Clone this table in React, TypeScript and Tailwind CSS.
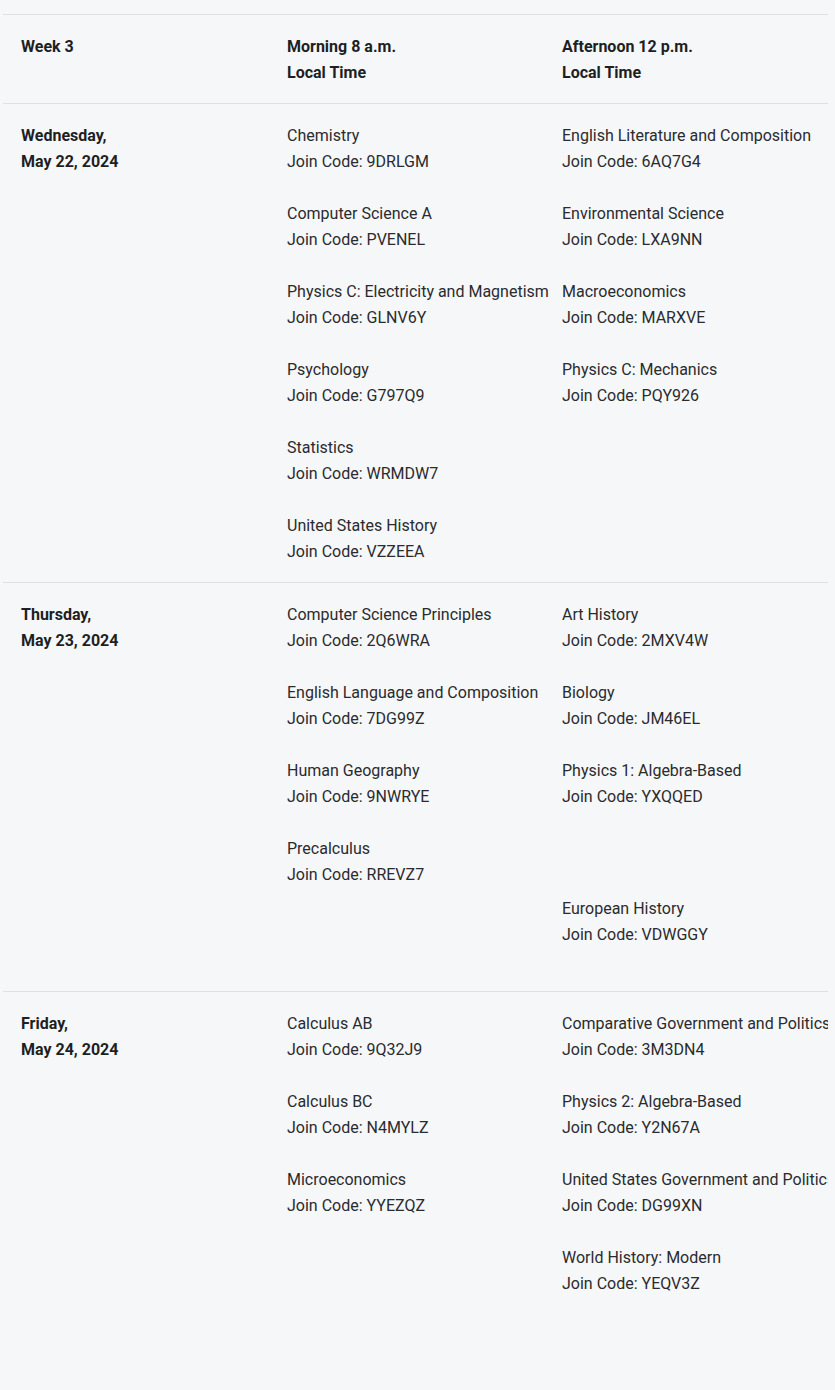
import React from "react";

type Entry = { name: string; code: string; gapBefore?: number };
type Row = { day: string; date: string; morning: Entry[]; afternoon: Entry[]; extraBottom?: boolean };

const rows: Row[] = [
  {
    day: "Wednesday,",
    date: "May 22, 2024",
    morning: [
      { name: "Chemistry", code: "9DRLGM" },
      { name: "Computer Science A", code: "PVENEL" },
      { name: "Physics C: Electricity and Magnetism", code: "GLNV6Y" },
      { name: "Psychology", code: "G797Q9" },
      { name: "Statistics", code: "WRMDW7" },
      { name: "United States History", code: "VZZEEA" },
    ],
    afternoon: [
      { name: "English Literature and Composition", code: "6AQ7G4" },
      { name: "Environmental Science", code: "LXA9NN" },
      { name: "Macroeconomics", code: "MARXVE" },
      { name: "Physics C: Mechanics", code: "PQY926" },
    ],
  },
  {
    day: "Thursday,",
    date: "May 23, 2024",
    morning: [
      { name: "Computer Science Principles", code: "2Q6WRA" },
      { name: "English Language and Composition", code: "7DG99Z" },
      { name: "Human Geography", code: "9NWRYE" },
      { name: "Precalculus", code: "RREVZ7" },
    ],
    afternoon: [
      { name: "Art History", code: "2MXV4W" },
      { name: "Biology", code: "JM46EL" },
      { name: "Physics 1: Algebra-Based", code: "YXQQED" },
      { name: "European History", code: "VDWGGY", gapBefore: 1 },
    ],
    extraBottom: true,
  },
  {
    day: "Friday,",
    date: "May 24, 2024",
    morning: [
      { name: "Calculus AB", code: "9Q32J9" },
      { name: "Calculus BC", code: "N4MYLZ" },
      { name: "Microeconomics", code: "YYEZQZ" },
    ],
    afternoon: [
      { name: "Comparative Government and Politics", code: "3M3DN4" },
      { name: "Physics 2: Algebra-Based", code: "Y2N67A" },
      { name: "United States Government and Politics", code: "DG99XN" },
      { name: "World History: Modern", code: "YEQV3Z" },
    ],
  },
];

function Entries({ items, extraBottom }: { items: Entry[]; extraBottom?: boolean }) {
  return (
    <div className={extraBottom ? "flex flex-col pb-[26px]" : "flex flex-col"}>
      {items.map((e, i) => (
        <div
          key={e.name}
          className={
            i === 0 ? "" : e.gapBefore ? "mt-[86px]" : "mt-[26px]"
          }
        >
          <div className="whitespace-nowrap">{e.name}</div>
          <div className="whitespace-nowrap">Join Code: {e.code}</div>
        </div>
      ))}
    </div>
  );
}

export default function App() {
  return (
    <div
      className="min-h-[1390px] w-full bg-[#f6f7f9] text-[#2a2b2e] text-[16px] leading-[26px]"
      style={{ fontFamily: "Roboto, 'Liberation Sans', sans-serif" }}
    >
      <div className="pt-[14px] pl-[3px]">
        <div className="w-[825px] overflow-hidden">
          <div className="grid grid-cols-[266px_275px_1fr] border-t border-[#dfe0e2] font-bold text-[#1e1f22]">
            <div className="pl-[18px] pt-[19px] pb-[17px]">Week 3</div>
            <div className="pl-[18px] pt-[19px] pb-[17px]">
              <div>Morning 8 a.m.</div>
              <div>Local Time</div>
            </div>
            <div className="pl-[18px] pt-[19px] pb-[17px]">
              <div>Afternoon 12 p.m.</div>
              <div>Local Time</div>
            </div>
          </div>
          {rows.map((r) => (
            <div
              key={r.day}
              className="grid grid-cols-[266px_275px_1fr] border-t border-[#dfe0e2]"
            >
              <div className="pl-[18px] pt-[19px] pb-[17px] font-bold text-[#1e1f22]">
                <div>{r.day}</div>
                <div>{r.date}</div>
              </div>
              <div className="pl-[18px] pt-[19px] pb-[17px]">
                <Entries items={r.morning} />
              </div>
              <div className="pl-[18px] pt-[19px] pb-[17px]">
                <Entries items={r.afternoon} extraBottom={r.extraBottom} />
              </div>
            </div>
          ))}
        </div>
      </div>
    </div>
  );
}
